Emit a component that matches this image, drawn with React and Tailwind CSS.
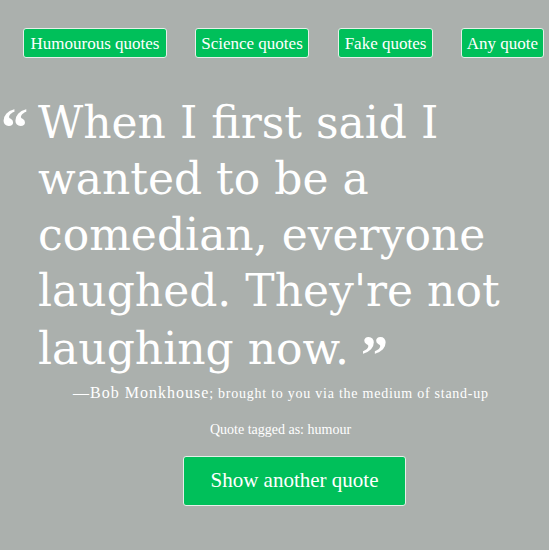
export default function App() {
  const btn = "bg-[#00c05a] text-white border border-[#e6efe9] rounded-[3px] h-[30px] text-[17px] leading-none whitespace-nowrap flex items-center justify-center";
  const serif = { fontFamily: '"Liberation Serif", serif' };
  return (
    <div className="w-[549px] h-[550px] bg-[#abb0ad] overflow-hidden text-white" style={{ fontFamily: '"DejaVu Serif", serif' }}>
      <div className="flex pt-[28px] pl-[23px]" style={serif}>
        <button className={btn + " w-[144px]"}>Humourous quotes</button>
        <button className={btn + " w-[114px] ml-[28px]"}>Science quotes</button>
        <button className={btn + " w-[95px] ml-[29px]"}>Fake quotes</button>
        <button className={btn + " w-[83px] ml-[28px]"}>Any quote</button>
      </div>
      <div className="flex pl-[1px] mt-[37px]">
        <div className="w-[37px] pt-[5px] text-[54px] leading-[56px] font-bold" style={serif}>“</div>
        <div className="text-[44px] leading-[56px] whitespace-nowrap">
          When I first said I<br />
          wanted to be a<br />
          comedian, everyone<br />
          laughed. They're not<br />
          laughing now.<span className="relative top-[9px] ml-[12px] font-bold text-[54px] leading-none" style={serif}>”</span>
        </div>
      </div>
      <div className="pl-[73px] mt-[4px] text-[16px] tracking-[1px] whitespace-nowrap" style={serif}>
        —Bob Monkhouse<span className="text-[14px] tracking-[0.75px]">; brought to you via the medium of stand-up</span>
      </div>
      <div className="text-center text-[14px] mt-[14px] pl-[12px]" style={serif}>Quote tagged as: humour</div>
      <div className="flex justify-center pl-[40px] mt-[16px]">
        <button className="bg-[#00c05a] text-white border border-[#e6efe9] rounded-[3px] w-[223px] h-[50px] text-[21px]" style={serif}>Show another quote</button>
      </div>
    </div>
  );
}
